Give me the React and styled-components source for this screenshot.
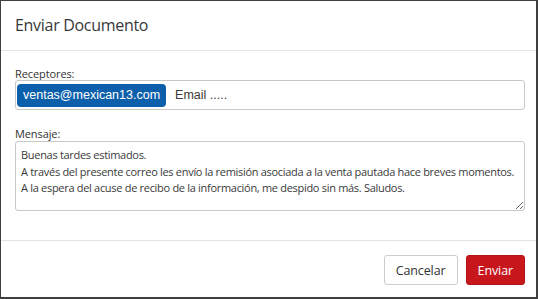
import React from 'react';
import styled, { createGlobalStyle } from 'styled-components';

const GlobalStyle = createGlobalStyle`
  html, body {
    margin: 0;
    padding: 0;
    background: #ffffff;
  }
  * {
    box-sizing: border-box;
  }
`;

const Modal = styled.div`
  width: 538px;
  height: 299px;
  display: flex;
  flex-direction: column;
  background: #ffffff;
  border: 1px solid #3f3f3f;
  border-right-width: 2px;
  border-bottom-width: 2px;
  font-family: 'Open Sans', 'Liberation Sans', sans-serif;
  color: #333333;
`;

const Header = styled.div`
  height: 50px;
  display: flex;
  align-items: center;
  padding: 0 14px 2px;
  border-bottom: 1px solid #e3e3e3;
`;

const Title = styled.h4`
  margin: 0;
  font-size: 16px;
  font-weight: 400;
  letter-spacing: -0.3px;
  color: #383838;
`;

const Body = styled.div`
  flex: 1;
  display: flex;
  flex-direction: column;
  padding: 16px 11px 0 14px;
`;

const Label = styled.label`
  display: block;
  font-size: 11px;
  line-height: 13px;
  letter-spacing: -0.1px;
  color: #333333;
  margin-top: ${({ $spaced }) => ($spaced ? '17px' : '0')};
`;

const TagInput = styled.div`
  height: 30px;
  display: flex;
  align-items: center;
  gap: 9px;
  padding: 0 1px;
  border: 1px solid #c8c8c8;
  border-radius: 3px;
`;

const Tag = styled.span`
  height: 23px;
  display: flex;
  align-items: center;
  padding: 0 6px;
  border-radius: 4px;
  background: #0c5fab;
  color: #ffffff;
  font-family: 'Liberation Sans', Arial, sans-serif;
  font-size: 12.5px;
`;

const EmailPlaceholder = styled.span`
  font-family: 'Liberation Sans', Arial, sans-serif;
  font-size: 12.5px;
  color: #3a3a3a;
`;

const Message = styled.textarea`
  height: 70px;
  width: 100%;
  margin: 1px 0 0;
  padding: 5px 5px;
  border: 1px solid #c8c8c8;
  border-radius: 3px;
  font-family: 'Open Sans', 'Liberation Sans', sans-serif;
  font-size: 11px;
  line-height: 16.6px;
  letter-spacing: -0.3px;
  color: #3a3a3a;
  resize: vertical;
  outline: none;
  overflow: hidden;
`;

const Footer = styled.div`
  display: flex;
  justify-content: flex-end;
  gap: 8px;
  padding: 14px 11px 12px 14px;
  border-top: 1px solid #e3e3e3;
`;

const Button = styled.button`
  height: 30px;
  padding: 0 ${({ $primary }) => ($primary ? '11px' : '11px')};
  border-radius: 3px;
  border: 1px solid ${({ $primary }) => ($primary ? '#b3141a' : '#cccccc')};
  background: ${({ $primary }) => ($primary ? '#c8161d' : '#ffffff')};
  color: ${({ $primary }) => ($primary ? '#ffffff' : '#333333')};
  font-family: 'Open Sans', 'Liberation Sans', sans-serif;
  font-size: 12.5px;
  letter-spacing: -0.1px;
  cursor: pointer;
`;

const mensaje =
  'Buenas tardes estimados.\n' +
  'A través del presente correo les envío la remisión asociada a la venta pautada hace breves momentos.\n' +
  'A la espera del acuse de recibo de la información, me despido sin más. Saludos.';

export default function App() {
  return (
    <>
      <GlobalStyle />
      <Modal>
        <Header>
          <Title>Enviar Documento</Title>
        </Header>
        <Body>
          <Label>Receptores:</Label>
          <TagInput>
            <Tag>ventas@mexican13.com</Tag>
            <EmailPlaceholder>Email .....</EmailPlaceholder>
          </TagInput>
          <Label $spaced>Mensaje:</Label>
          <Message defaultValue={mensaje} />
        </Body>
        <Footer>
          <Button>Cancelar</Button>
          <Button $primary>Enviar</Button>
        </Footer>
      </Modal>
    </>
  );
}
